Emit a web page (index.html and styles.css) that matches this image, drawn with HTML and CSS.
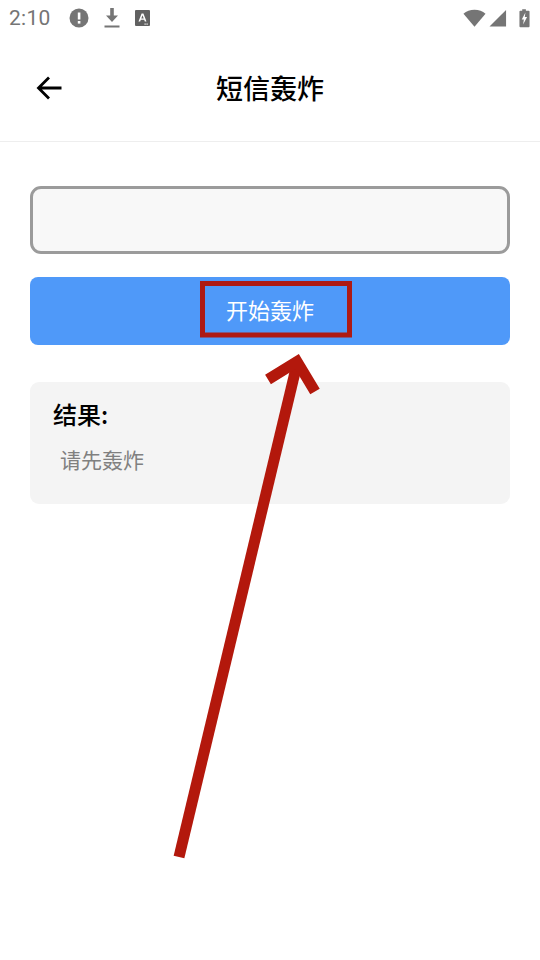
FILE: index.html
```html
<!DOCTYPE html>
<html lang="zh">
<head>
<meta charset="utf-8">
<title>短信轰炸</title>
<link rel="stylesheet" href="styles.css">
</head>
<body>
<div class="screen">
  <div class="status">
    <div class="status-left">
      <span class="time">2:10</span>
      <svg class="ic" width="20" height="20" viewBox="0 0 20 20"><circle cx="10" cy="10" r="9.5" fill="#757575"/><rect x="8.8" y="4.5" width="2.6" height="7" fill="#fff"/><rect x="8.8" y="13" width="2.6" height="2.6" fill="#fff"/></svg>
      <svg class="ic" width="16" height="22" viewBox="0 0 16 22"><path d="M6.2 1h3.600v7.500H14L8 15 2 8.500h4.200z" fill="#757575"/><rect x="0.500" y="18.500" width="15" height="2" fill="#757575"/></svg>
      <svg class="ic" width="15" height="16" viewBox="0 0 15 16"><rect width="15" height="16" rx="1" fill="#616161"/><path d="M3.500 11.500 6.600 3.500h1.800l3.100 8h-1.700l-.6-1.700H5.800l-.6 1.700zM6.300 8.500h2.400L7.500 5.200z" fill="#fff"/><rect x="9.500" y="13.500" width="1.200" height="1.200" fill="#fff"/><rect x="11.500" y="13.500" width="1.200" height="1.200" fill="#fff"/></svg>
    </div>
    <div class="status-right">
      <svg class="wifi" width="23" height="18" viewBox="0 0 24 18"><path d="M0.500 4.500C3.500 1.800 7.500 0.300 12 0.300s8.500 1.500 11.500 4.200L12 18z" fill="#757575"/></svg>
      <svg class="signal" width="18" height="18" viewBox="0 0 19 18"><path d="M18 0.500V18H0.500z" fill="#757575"/></svg>
      <svg width="11" height="20" viewBox="0 0 12 20"><path d="M3.500 0.500h4v1.500H10.500a1 1 0 0 1 1 1V19a1 1 0 0 1-1 1H1.500a1 1 0 0 1-1-1V3a1 1 0 0 1 1-1H3.500z" fill="#757575"/><path d="M7 4 3 11.500h2.300L4.500 17 8.800 9H6.300z" fill="#fff"/></svg>
    </div>
  </div>
  <header class="nav">
    <svg class="back" width="28" height="26" viewBox="0 0 28 26"><path d="M26.500 13H3.500M14 2.500 3.500 13 14 23.500" fill="none" stroke="#000" stroke-width="2.800"/></svg>
    <h1 class="title">短信轰炸</h1>
  </header>
  <main class="content">
    <div class="field"></div>
    <button class="action"><span class="action-label">开始轰炸</span></button>
    <section class="result">
      <h2 class="result-title">结果:</h2>
      <p class="result-text">请先轰炸</p>
    </section>
  </main>
  <svg class="pointer" width="540" height="960" viewBox="0 0 540 960">
    <rect x="202.500" y="283.500" width="147" height="51.500" fill="none" stroke="#ae1a14" stroke-width="5"/>
    <path d="M179 857 297 364" fill="none" stroke="#b3180c" stroke-width="11"/>
    <path d="M268 379.500 297 361.500 315 391.500" fill="none" stroke="#b3180c" stroke-width="11"/>
  </svg>
</div>
</body>
</html>
```

FILE: styles.css
```css
* { box-sizing: border-box; }
html, body { margin: 0; padding: 0; }
body {
  background: #fff;
  font-family: "Noto Sans CJK SC", "Noto Sans", Roboto, sans-serif;
}
.screen {
  position: relative;
  width: 540px;
  height: 960px;
  overflow: hidden;
  background: #fff;
}
.status {
  height: 36px;
  padding: 0 10px 0 9px;
  display: flex;
  align-items: center;
  justify-content: space-between;
}
.status-left { display: flex; align-items: center; gap: 15px; }
.status-right { display: flex; align-items: center; }
.wifi { margin-right: 3px; }
.signal { margin-right: 12px; }
.time {
  font-family: Roboto, sans-serif;
  font-size: 21px;
  color: #757575;
  letter-spacing: 0.3px;
  margin-right: 3px;
}
.nav {
  position: relative;
  height: 106px;
  display: flex;
  align-items: center;
  justify-content: center;
  padding-bottom: 1px;
  border-bottom: 1px solid #eeeeee;
}
.back { position: absolute; left: 35px; top: 39px; }
.title {
  margin: 0;
  font-size: 27px;
  line-height: 36px;
  font-weight: 500;
  color: #000;
}
.content {
  padding: 44px 30px 0;
  display: flex;
  flex-direction: column;
}
.field {
  height: 68px;
  background: #f8f8f8;
  border: 3px solid #9b9b9b;
  border-radius: 11px;
}
.action {
  height: 68px;
  margin-top: 23px;
  padding: 0 0 4px;
  border: 0;
  border-radius: 8px;
  background: #4f99f9;
  display: flex;
  align-items: center;
  justify-content: center;
  font-family: inherit;
}
.action-label {
  color: #fff;
  font-size: 22px;
}
.result {
  margin-top: 37px;
  height: 122px;
  padding: 16px 23px;
  background: #f4f4f4;
  border-radius: 9px;
}
.result-title {
  margin: 0;
  font-size: 24px;
  line-height: 32px;
  font-weight: 500;
  color: #000;
}
.result-text {
  margin: 14px 0 0 7px;
  font-size: 21px;
  line-height: 30px;
  color: #808080;
}
.pointer { position: absolute; left: 0; top: 0; pointer-events: none; }
```
